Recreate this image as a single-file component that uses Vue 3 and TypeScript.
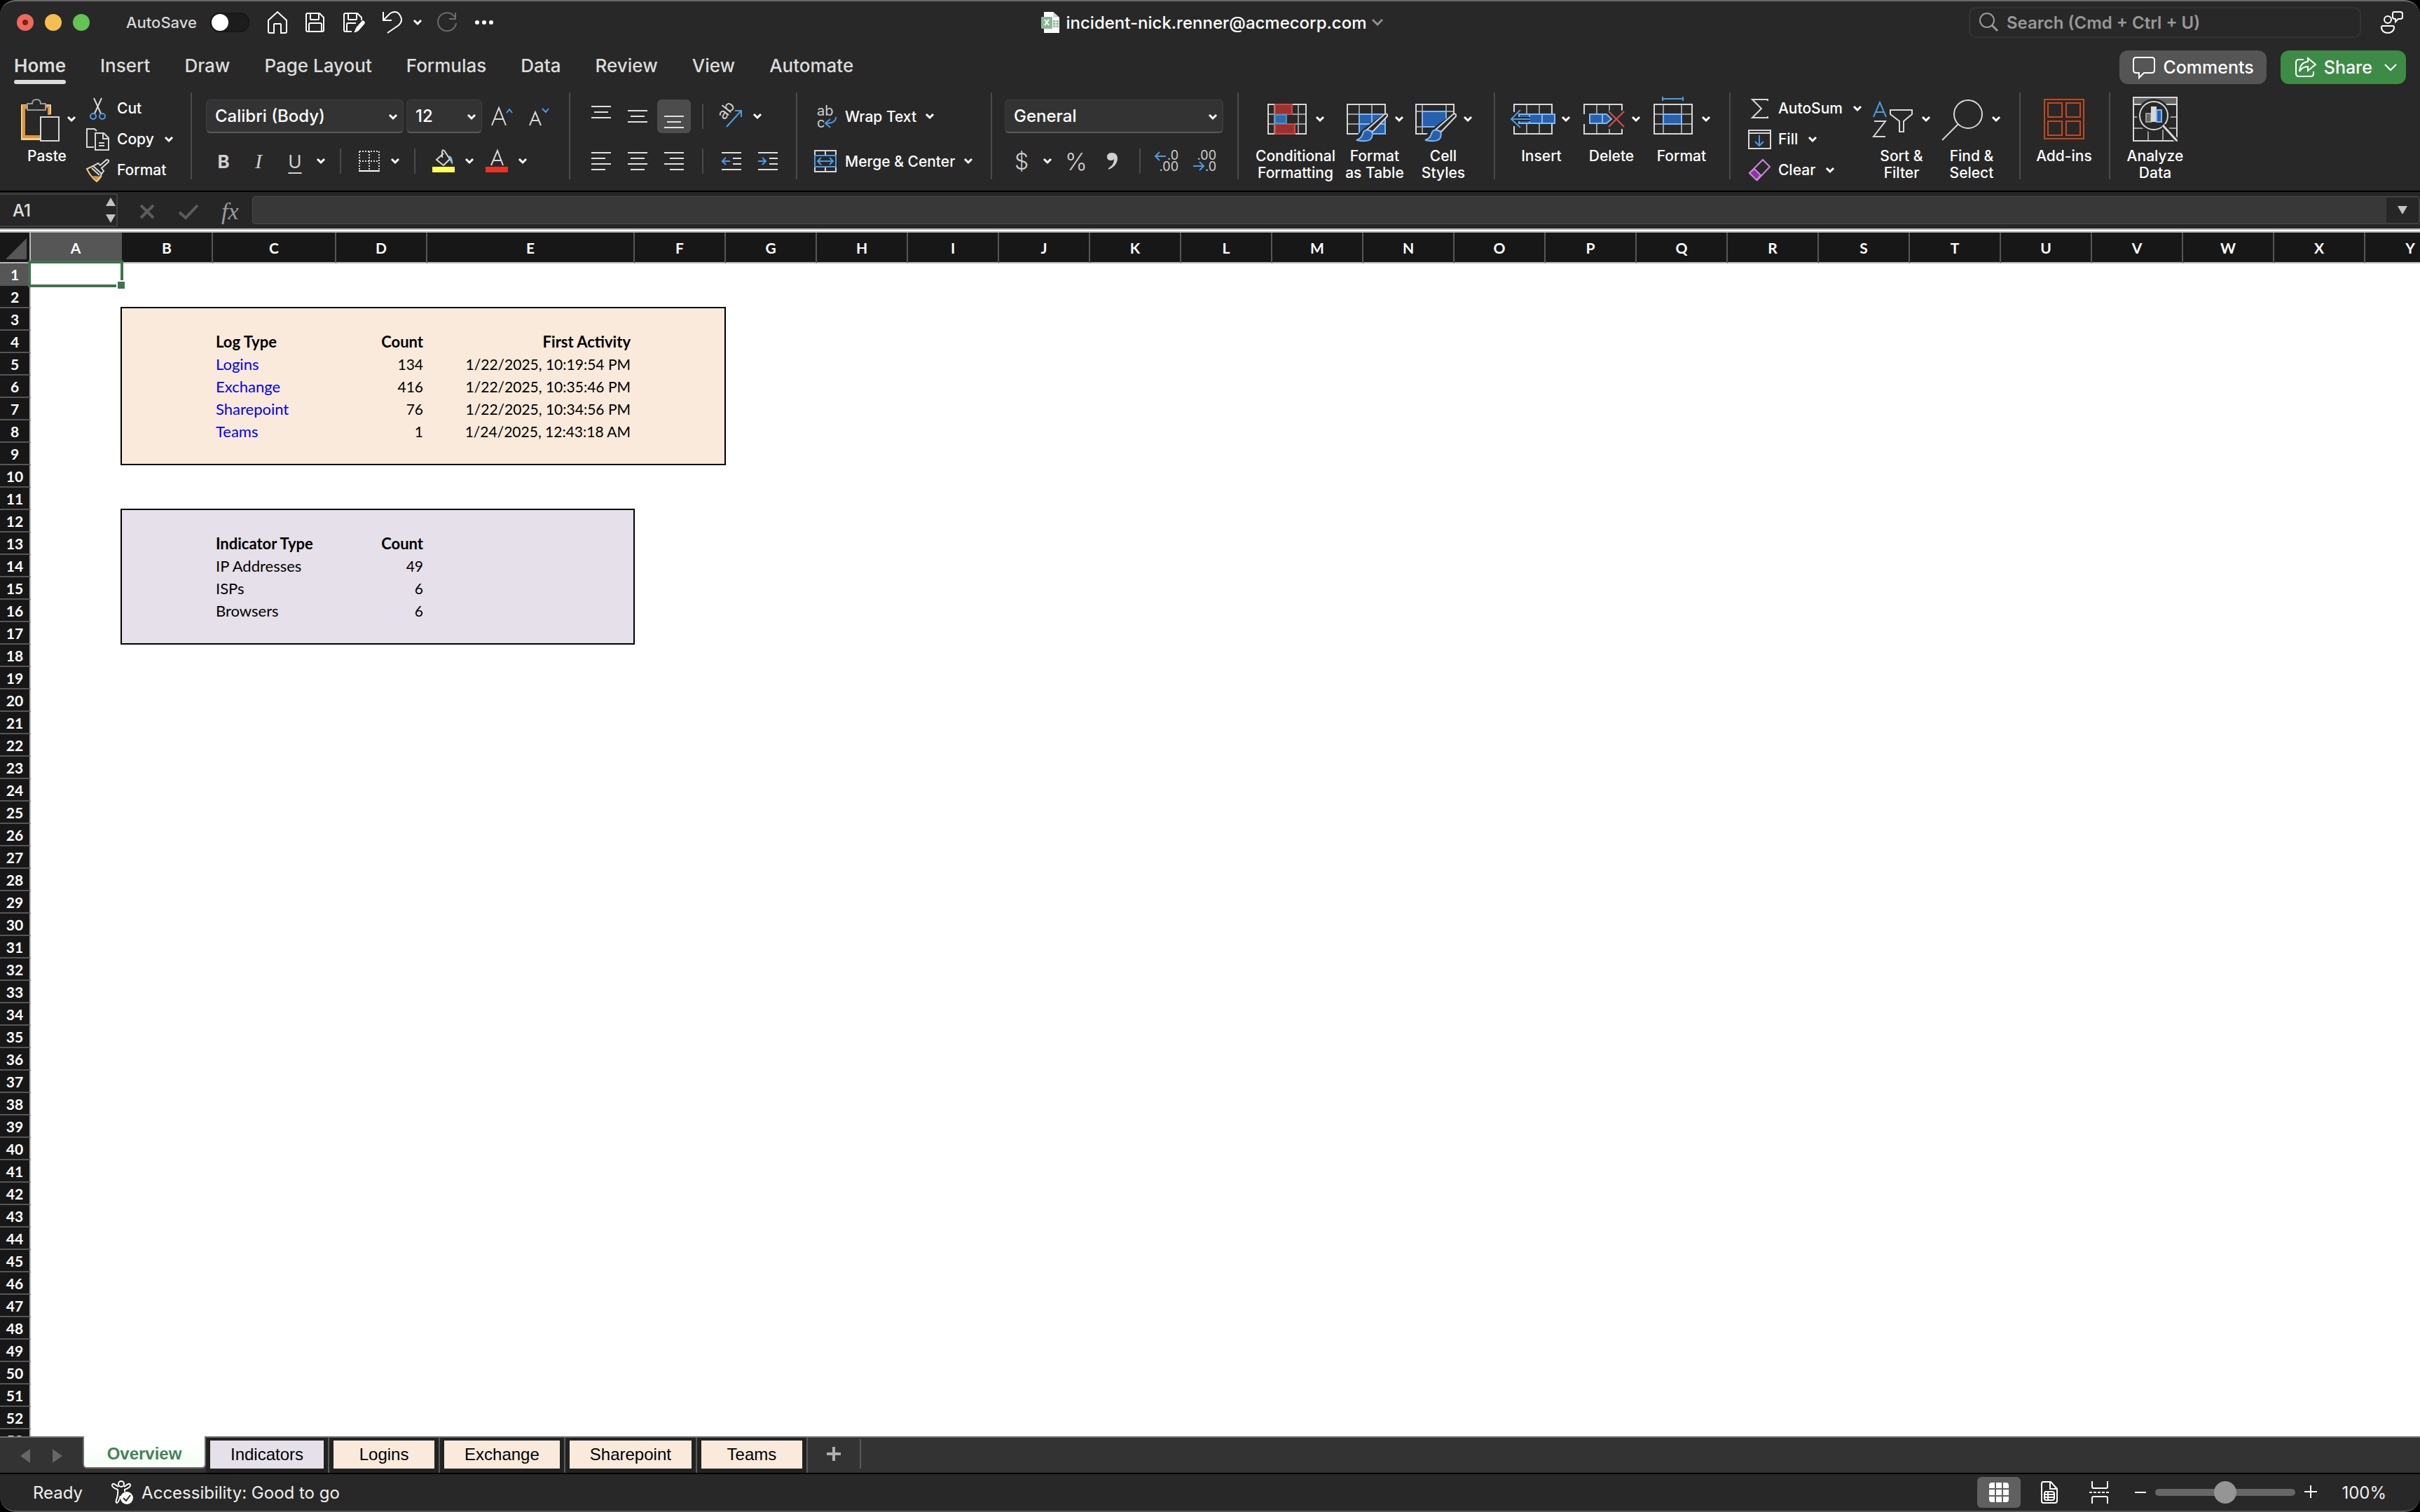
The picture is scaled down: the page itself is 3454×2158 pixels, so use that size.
<script setup lang="ts">
import { h, ref } from 'vue'

type Kind = 'text' | 'head' | 'link' | 'num'
interface Cell { text: string; kind: Kind }

const Chevron = () =>
  h('svg', { class: 'chev', viewBox: '0 0 14 10', width: 14, height: 10, 'aria-hidden': 'true' }, [
    h('path', { d: 'M2 2l5 5 5-5', fill: 'none', stroke: 'currentColor', 'stroke-width': 3 }),
  ])

const menuTabs = ['Home', 'Insert', 'Draw', 'Page Layout', 'Formulas', 'Data', 'Review', 'View', 'Automate']

const colWidths = [130, 130, 176, 130, 296]
const columns = 'ABCDEFGHIJKLMNOPQRSTUVWXY'.split('').map((name, i) => ({ name, width: colWidths[i] ?? 130 }))

const cells: Record<string, Cell> = {}
function put(row: number, values: string[], kinds: Kind[]) {
  values.forEach((text, i) => { cells['CDE'[i] + row] = { text, kind: kinds[i] } })
}
put(4, ['Log Type', 'Count', 'First Activity'], ['head', 'head', 'head'])
put(5, ['Logins', '134', '1/22/2025, 10:19:54 PM'], ['link', 'num', 'num'])
put(6, ['Exchange', '416', '1/22/2025, 10:35:46 PM'], ['link', 'num', 'num'])
put(7, ['Sharepoint', '76', '1/22/2025, 10:34:56 PM'], ['link', 'num', 'num'])
put(8, ['Teams', '1', '1/24/2025, 12:43:18 AM'], ['link', 'num', 'num'])
put(13, ['Indicator Type', 'Count'], ['head', 'head'])
put(14, ['IP Addresses', '49'], ['text', 'num'])
put(15, ['ISPs', '6'], ['text', 'num'])
put(16, ['Browsers', '6'], ['text', 'num'])

const panels = [
  { fill: 'peach', left: 1, right: 5, top: 3, bottom: 9 },
  { fill: 'lilac', left: 1, right: 4, top: 12, bottom: 17 },
]

// A panel's outline lies on the right and bottom edges of the cells that touch it.
function cellClass(col: number, row: number): string[] {
  const out: string[] = []
  for (const p of panels) {
    const inCols = col >= p.left && col <= p.right
    const inRows = row >= p.top && row <= p.bottom
    if (inCols && inRows) out.push(p.fill)
    if (inRows && (col === p.right || col === p.left - 1)) out.push('edge-right')
    if (inCols && (row === p.bottom || row === p.top - 1)) out.push('edge-bottom')
    if (row === p.top - 1 && (col === p.left - 1)) out.push('edge-corner')
  }
  const cell = cells[columns[col].name + row]
  if (cell) {
    out.push(cell.kind)
    if (col > 2) out.push('right')
  }
  return out
}

const sheets = [
  { name: 'Indicators', fill: 'lilac' },
  { name: 'Logins', fill: 'peach' },
  { name: 'Exchange', fill: 'peach' },
  { name: 'Sharepoint', fill: 'peach' },
  { name: 'Teams', fill: 'peach' },
]

const vAligns = [
  { name: 'Top align', d: 'M1 7h28M5 15h20M1 23h28', on: false },
  { name: 'Middle align', d: 'M1 13h28M5 21h20M1 29h28', on: false },
  { name: 'Bottom align', d: 'M1 21h28M5 29h20M1 37h28', on: true },
]
const hAligns = [
  { name: 'Align left', d: 'M1 9h28M1 17h20M1 25h28M1 33h20' },
  { name: 'Center', d: 'M1 9h28M5 17h20M1 25h28M5 33h20' },
  { name: 'Align right', d: 'M1 9h28M9 17h20M1 25h28M9 33h20' },
]

const autosave = ref(false)
const fontName = ref('Calibri (Body)')
const fontSize = ref('12')
const numberFormat = ref('General')
const search = ref('')
const cellRef = ref('A1')
const formula = ref('')
const zoom = ref(100)
</script>

<template>
  <div class="window">
    <header class="titlebar">
      <div class="title-left">
        <div class="lights">
          <button class="light red" aria-label="Close"><span class="dot"></span></button>
          <button class="light amber" aria-label="Minimize"></button>
          <button class="light green" aria-label="Zoom window"></button>
        </div>
        <label class="autosave">AutoSave <input v-model="autosave" type="checkbox" class="toggle"></label>
        <div class="quick">
          <button aria-label="Home"><svg width="30" height="34" viewBox="0 0 30 34"><path d="M2 14L15 2l13 12v16q0 2-2 2h-6V20q0-1-1-1h-8q-1 0-1 1v12H4q-2 0-2-2z" class="w" /></svg></button>
          <button aria-label="Save"><svg width="30" height="34" viewBox="0 0 30 34"><path d="M4 4h17l6 6v18q0 2-2 2H4q-2 0-2-2V6q0-2 2-2zM8 4v8q0 1 1 1h10q1 0 1-1V4M6 30V20q0-2 2-2h14q2 0 2 2v10" class="w" /></svg></button>
          <button aria-label="Save as"><svg width="32" height="34" viewBox="0 0 32 34"><path d="M13 30H4q-2 0-2-2V6q0-2 2-2h17l6 6v4M8 4v8q0 1 1 1h10q1 0 1-1V4M6 30V20q0-2 2-2h11" class="w" /><path d="M17 31l3-7 8-9q2-1 3 1t-1 4l-8 9z" fill="#fff" stroke="#fff" /></svg></button>
          <button class="undo" aria-label="Undo"><svg width="30" height="34" viewBox="0 0 30 34"><path d="M2 2v12h12M3 13L12 4q9-5 14 3t-2 14L8 32" class="w" /></svg><Chevron /></button>
          <button class="dim" aria-label="Redo"><svg width="30" height="34" viewBox="0 0 30 34"><path d="M27 3v9h-9M27 11A13 13 0 1 0 28 18" fill="none" stroke="#6b6b6b" stroke-width="2" /></svg></button>
          <button aria-label="More"><svg width="28" height="34" viewBox="0 0 28 34"><g fill="#fff"><circle cx="4" cy="17" r="3" /><circle cx="14" cy="17" r="3" /><circle cx="24" cy="17" r="3" /></g></svg></button>
        </div>
      </div>
      <div class="doc">
        <svg width="28" height="32" viewBox="0 0 28 32"><path d="M4 1h13l9 8v22H4z" fill="#fff" /><path d="M17 1l9 8h-9z" fill="#d5d5d5" /><path d="M17 13h8v10h-8z" fill="#8fb79b" /><path d="M17 16h8M17 20h8M21 13v10" stroke="#fff" /><rect x="0" y="8" width="16" height="17" rx="1" fill="#8ab797" /><path d="M5 12l6 8M11 12l-6 8" stroke="#fff" stroke-width="2" /></svg>
        <h1>incident-nick.renner@acmecorp.com</h1>
        <svg width="16" height="10" viewBox="0 0 16 10"><path d="M1 1l7 7 7-7" fill="none" stroke="#8f8f8f" stroke-width="3" /></svg>
      </div>
      <div class="title-right">
        <label class="search">
          <svg width="28" height="28" viewBox="0 0 28 28"><circle cx="12" cy="11" r="10" fill="none" stroke="#999" stroke-width="2" /><path d="M19 18l8 8" stroke="#999" stroke-width="3" /></svg>
          <input v-model="search" type="text" placeholder="Search (Cmd + Ctrl + U)" aria-label="Search">
        </label>
        <button aria-label="Presence"><svg width="34" height="34" viewBox="0 0 34 34"><circle cx="11" cy="13" r="5" class="w" /><path d="M4 22h14q2 0 2 2c0 5-4 8-9 8s-9-3-9-8q0-2 2-2zM20 2h9q3 0 3 3v4q0 3-3 3h-3l-4 4v-4h-1q-3 0-3-3V5q0-3 2-3z" class="w" /></svg></button>
      </div>
    </header>

    <nav class="menu">
      <div class="menu-tabs">
        <button v-for="(t, i) in menuTabs" :key="t" :class="{ active: i === 0 }">{{ t }}</button>
      </div>
      <div class="actions">
        <button class="comments"><svg width="34" height="34" viewBox="0 0 34 34"><path d="M6 3h22q4 0 4 4v14q0 4-4 4H17l-7 7v-7H6q-4 0-4-4V7q0-4 4-4z" class="w" /></svg>Comments</button>
        <button class="share"><svg width="32" height="32" viewBox="0 0 32 32"><path d="M13 5H6Q2 5 2 9v16q0 4 4 4h17q4 0 4-4v-3M19 3l11 9-11 9v-6q-8 0-12 7 1-13 12-14z" class="w" /></svg>Share<svg class="share-chev" width="20" height="12" viewBox="0 0 20 12"><path d="M2 2l8 8 8-8" class="w" /></svg></button>
      </div>
    </nav>

    <section class="ribbon">
      <div class="group clipboard">
        <button class="big">
          <span class="pic">
            <svg width="60" height="64" viewBox="0 0 60 64"><path d="M15 14H8v45h24" fill="none" stroke="#f0d08a" stroke-width="6" /><path d="M15 14H9v43h23M38 14h7v12" fill="none" stroke="#dd9440" stroke-width="4" /><path d="M40 12h7v13" fill="none" stroke="#f0d08a" stroke-width="2" /><path d="M14 10h7q0-6 6-6t6 6h7v9H14z" fill="#282828" stroke="#9b9b9b" stroke-width="2" /><path d="M33 29h26v34H33z" fill="#282828" stroke="#d8d8d8" stroke-width="2" /></svg><Chevron />
          </span>
          <span class="cap">Paste</span>
        </button>
        <div class="stack">
          <button><svg width="34" height="34" viewBox="0 0 34 34"><path d="M11 2l10 22M22 2L12 24" fill="none" stroke="#d8d8d8" stroke-width="2" /><circle cx="10" cy="28" r="4" class="b" /><circle cx="23" cy="28" r="4" class="b" /></svg>Cut</button>
          <button><svg width="34" height="34" viewBox="0 0 34 34"><path d="M11 28H1V2h11l3 3M13 8h12l7 7v17H13zM24 8v8h8M18 22h8M18 26h8" class="g" /></svg>Copy<Chevron /></button>
          <button><svg width="34" height="34" viewBox="0 0 34 34"><path d="M9 25l14 1-7 7z" fill="#dd9440" /><path d="M10 11L1 15q5 11 14 18 6-5 7-12" fill="none" stroke="#f0d08a" stroke-width="2" /><path d="M10 11l12 11 3-4-3-4 10-9q1-3-3-3l-9 8-3-3zM8 14l11 10" class="g" /></svg>Format</button>
        </div>
      </div>

      <div class="group font">
        <div class="row tight">
          <label class="drop font-drop"><select v-model="fontName" aria-label="Font"><option>Calibri (Body)</option></select><Chevron /></label>
          <label class="drop size-drop"><select v-model="fontSize" aria-label="Font size"><option>12</option></select><Chevron /></label>
          <button class="grow" aria-label="Increase font size"><svg width="34" height="32" viewBox="0 0 34 32"><path d="M2 29L12 4l10 25M6 20h12" class="g" /><path d="M23 11l4-5 4 5" class="b" /></svg></button>
          <button class="shrink" aria-label="Decrease font size"><svg width="34" height="32" viewBox="0 0 34 32"><path d="M4 29l8-19 8 19M7 22h10" class="g" /><path d="M22 5l5 5 4-5" class="b" /></svg></button>
        </div>
        <div class="row styles">
          <button class="glyph bold">B</button>
          <button class="glyph italic">I</button>
          <button class="glyph under">U</button>
          <button aria-label="Underline styles"><Chevron /></button>
          <i class="sep"></i>
          <button class="pair" aria-label="Borders"><svg width="32" height="32" viewBox="0 0 32 32"><path d="M2 2h28M2 2v26M30 2v26M16 2v26M2 16h28" fill="none" stroke="#ddd" stroke-width="2" stroke-dasharray="2 2" /><path d="M1 30h30" stroke="#fff" stroke-width="2" /></svg><Chevron /></button>
          <i class="sep"></i>
          <button class="pair" aria-label="Fill color"><svg width="32" height="34" viewBox="0 0 32 34"><path d="M16 6L6 15l10 8 9-9-8-12q-3-2-3 2v8" class="g" /><path d="M24 9q6 2 5 13-5-5-5-13z" fill="#8fbde8" /><path d="M0 25h32v8H0z" fill="#ffff54" /></svg><Chevron /></button>
          <button class="pair" aria-label="Font color"><svg width="32" height="34" viewBox="0 0 32 34"><path d="M8 23l9-21 8 21M11 16h11" class="g" /><path d="M0 25h32v8H0z" fill="#ea3323" /></svg><Chevron /></button>
        </div>
      </div>

      <div class="group align">
        <div class="row">
          <button v-for="a in vAligns" :key="a.name" class="al" :class="{ on: a.on }" :aria-label="a.name"><svg width="30" height="42" viewBox="0 0 30 42"><path :d="a.d" class="bar" /></svg></button>
          <i class="sep"></i>
          <button class="pair orient" aria-label="Orientation"><svg width="34" height="34" viewBox="0 0 34 34"><text x="8" y="23" transform="rotate(-52 8 23)" font-size="22" font-weight="400" fill="#d0d0d0">ab</text><path d="M11 32L32 9M23 9h9v9" class="b" /></svg><Chevron /></button>
        </div>
        <div class="row">
          <button v-for="a in hAligns" :key="a.name" class="al" :aria-label="a.name"><svg width="30" height="42" viewBox="0 0 30 42"><path :d="a.d" class="bar" /></svg></button>
          <i class="sep"></i>
          <button class="al wide" aria-label="Decrease indent"><svg width="30" height="42" viewBox="0 0 30 42"><path d="M1 9h28M17 17h12M17 25h12M1 33h28" class="bar" /><path d="M13 21H2M7 16l-5 5 5 5" class="b" /></svg></button>
          <button class="al" aria-label="Increase indent"><svg width="30" height="42" viewBox="0 0 30 42"><path d="M1 9h28M17 17h12M17 25h12M1 33h28" class="bar" /><path d="M1 21h11M7 16l5 5-5 5" class="b" /></svg></button>
        </div>
      </div>

      <div class="group merge">
        <button class="row"><svg width="32" height="34" viewBox="0 0 32 34"><text font-size="20" font-weight="400" fill="#d0d0d0"><tspan x="4" y="16">ab</tspan><tspan x="4" y="33">c</tspan></text><path d="M31 18q0 9-14 9M23 21l-7 6 7 6" class="b" /></svg>Wrap Text<Chevron /></button>
        <button class="row"><svg width="32" height="32" viewBox="0 0 32 32"><path d="M1 1h30v30H1zM16 1v30" class="g" /><path d="M1 8h30v16H1z" fill="#282828" stroke="#4f9be0" stroke-width="2" /><path d="M5 16h22M10 11l-5 5 5 5M22 11l5 5-5 5" class="b" /></svg>Merge &amp; Center<Chevron /></button>
      </div>

      <div class="group number">
        <label class="drop"><select v-model="numberFormat" aria-label="Number format"><option>General</option></select><Chevron /></label>
        <div class="row">
          <button class="money" aria-label="Currency"><span>$</span><Chevron /></button>
          <button class="percent">%</button>
          <button class="comma" aria-label="Comma style"><svg width="18" height="30" viewBox="0 0 18 30"><path d="M8 3c-5 0-7 3-7 6s2 5 6 5c2 0 3-1 4-2 0 6-3 10-8 13v2c8-3 13-9 13-16 0-5-3-8-8-8z" fill="#d0d0d0" /></svg></button>
          <i class="sep"></i>
          <button class="decimal" aria-label="Increase decimal"><svg width="34" height="34" viewBox="0 0 34 34"><text font-size="18" font-weight="400" fill="#d0d0d0" text-anchor="end"><tspan x="34" y="15">.0</tspan><tspan x="34" y="31">.00</tspan></text><path d="M16 10H1M7 4l-6 6 6 6" class="b" /></svg></button>
          <button class="decimal" aria-label="Decrease decimal"><svg width="34" height="34" viewBox="0 0 34 34"><text font-size="18" font-weight="400" fill="#d0d0d0" text-anchor="end"><tspan x="34" y="15">.00</tspan><tspan x="34" y="31">.0</tspan></text><path d="M1 24h15M10 18l6 6-6 6" class="b" /></svg></button>
        </div>
      </div>

      <div class="group bigs format-group">
        <button class="big">
          <span class="pic"><svg width="60" height="64" viewBox="0 0 60 64"><path d="M12 11v42M46 11v42M2 25h54M2 39h54" class="n" /><path d="M3 11h54v42H3z" class="g" /><path d="M13 11h24v14H13zM13 39h28v14H13z" fill="#9a3230" stroke="#cf4a46" stroke-width="2" /><path d="M13 26h16v12H13z" fill="#2b6fa8" stroke="#4793cf" stroke-width="2" /></svg><Chevron /></span>
          <span class="cap">Conditional<br>Formatting</span>
        </button>
        <button class="big">
          <span class="pic"><svg width="60" height="64" viewBox="0 0 60 64"><path d="M20 11v42M38 11v42M2 25h54M2 39h54" class="n" /><path d="M3 11h54v42H3z" class="g" /><path d="M20 25h37v28H20zM38 25v28M20 39h37" class="f" /><path d="M27 45L56 24q6-2 5 3L39 52 22 64 14 58z" fill="#282828" /><path d="M31 47L56 25q5-2 4 3L39 50z" class="g" /><path d="M16 62q7-2 9-9t9-5 4 10-22 4z" class="f" /></svg><Chevron /></span>
          <span class="cap">Format<br>as Table</span>
        </button>
        <button class="big">
          <span class="pic"><svg width="60" height="64" viewBox="0 0 60 64"><path d="M12 11v42M46 11v42M2 21h54M2 43h54" class="n" /><path d="M3 11h54v42H3z" class="g" /><path d="M12 21h34v22H12z" class="f" /><path d="M27 45L56 24l5 0v30H38L22 64 14 58z" fill="#282828" /><path d="M31 47L56 25q5-2 4 3L39 50z" class="g" /><path d="M16 62q7-2 9-9t9-5 4 10-22 4z" class="f" /></svg><Chevron /></span>
          <span class="cap">Cell<br>Styles</span>
        </button>
      </div>

      <div class="group bigs">
        <button class="big">
          <span class="pic"><svg width="60" height="64" viewBox="0 0 60 64"><path d="M21 11v42M39 11v42" class="n" /><path d="M3 11h54v42H3z" class="g" /><path d="M0 22h12v20H0z" fill="#282828" /><path d="M10 25h51v13H10zM25 25v13M43 25v13" class="f" /><path d="M26 32H0" stroke="#282828" stroke-width="6" /><path d="M26 32H0M12 19L-1 32l13 12" class="b" /></svg><Chevron /></span>
          <span class="cap">Insert</span>
        </button>
        <button class="big">
          <span class="pic"><svg width="60" height="64" viewBox="0 0 60 64"><path d="M21 11v42M39 11v42" class="n" /><path d="M3 11h54v42H3z" class="g" /><path d="M0 25h10v14H0zM36 20h24v26H36z" fill="#282828" /><path d="M11 25h24l7 7-7 6H11zM29 25v13" class="f" /><path d="M38 21l22 22M60 21L38 43" fill="none" stroke="#282828" stroke-width="6" /><path d="M38 21l22 22M60 21L38 43" fill="none" stroke="#d8504a" stroke-width="2" /></svg><Chevron /></span>
          <span class="cap">Delete</span>
        </button>
        <button class="big">
          <span class="pic"><svg width="60" height="64" viewBox="0 0 60 64"><path d="M16 11v42M42 11v42M2 25h54M2 39h54" class="n" /><path d="M3 11h54v42H3z" class="g" /><path d="M16 25h26v14H16z" class="f" /><path d="M15 0v6M44 0v6M15 3h29" class="b" /></svg><Chevron /></span>
          <span class="cap">Format</span>
        </button>
      </div>

      <div class="group edit">
        <div class="stack">
          <button><svg width="34" height="34" viewBox="0 0 34 34"><path d="M29 6V4H7l13 13L7 30h22v-2" class="g" /></svg>AutoSum<Chevron /></button>
          <button><svg width="34" height="34" viewBox="0 0 34 34"><path d="M2 4h31v26H2zM2 8h31" class="g" /><path d="M17 11v15M11 20l6 6 6-6" class="b" /></svg>Fill<Chevron /></button>
          <button><svg width="34" height="34" viewBox="0 0 34 34"><path d="M22 2l10 10-18 19L3 21z" fill="none" stroke="#c88ad6" stroke-width="2" /><path d="M10 15l9 9-6 7L3 21z" fill="#8a36a8" stroke="#c88ad6" stroke-width="2" /></svg>Clear<Chevron /></button>
        </div>
        <button class="big">
          <span class="pic"><svg width="60" height="64" viewBox="0 0 60 64"><path d="M2 29L11 8l9 21M5 22h12" class="b" /><path d="M3 35h16L2 57h17" class="g" /><path d="M26 19h31v6L45 35v15h-6V35L26 25z" class="g" /></svg><Chevron /></span>
          <span class="cap">Sort &amp;<br>Filter</span>
        </button>
        <button class="big">
          <span class="pic"><svg width="60" height="64" viewBox="0 0 60 64"><circle cx="37" cy="25" r="20" class="g" /><path d="M23 39L0 62" class="g" /></svg><Chevron /></span>
          <span class="cap">Find &amp;<br>Select</span>
        </button>
      </div>

      <div class="group addins">
        <button class="big">
          <span class="pic"><svg width="60" height="64" viewBox="0 0 60 64"><path d="M2 4h56v56H2zM7 9h20v20H7zM33 9h20v20H33zM7 35h20v20H7zM33 35h20v20H33z" fill="none" stroke="#c4481f" stroke-width="2" /></svg></span>
          <span class="cap">Add-ins</span>
        </button>
      </div>

      <div class="group addins last">
        <button class="big">
          <span class="pic"><svg width="64" height="64" viewBox="0 0 64 64"><path d="M1 1h62v10H1z" fill="#666" /><path d="M1 29h62M1 45h62M22 45v18M43 45v18" class="n" /><path d="M1 1h62v62H1zM1 11h62" class="g" /><circle cx="30" cy="27" r="24" fill="#282828" /><circle cx="30" cy="27" r="20" class="g" /><path d="M44 41l19 22" stroke="#282828" stroke-width="7" /><path d="M43 41l20 22" stroke="#d8d8d8" stroke-width="3" /><path d="M19 24h7v12h-7z" fill="#666" stroke="#999" stroke-width="2" /><path d="M26 14h8v22h-8z" fill="#d8d8d8" /><path d="M34 19h7v17h-7z" class="f" /></svg></span>
          <span class="cap">Analyze<br>Data</span>
        </button>
      </div>
    </section>

    <section class="formula">
      <div class="namebox">
        <input v-model="cellRef" type="text" aria-label="Name box">
        <svg width="16" height="38" viewBox="0 0 16 38"><path d="M1 13L8 1l7 12zM1 25l7 12 7-12z" fill="#c4c4c4" /></svg>
      </div>
      <div class="fbuttons">
        <button aria-label="Cancel"><svg width="24" height="24" viewBox="0 0 24 24"><path d="M3 3l18 18M21 3L3 21" fill="none" stroke="#5c5c5c" stroke-width="4" /></svg></button>
        <button aria-label="Enter"><svg width="30" height="24" viewBox="0 0 30 24"><path d="M2 13l9 8L28 3" fill="none" stroke="#5c5c5c" stroke-width="4" /></svg></button>
        <button class="fx">fx</button>
      </div>
      <div class="fbar">
        <input v-model="formula" type="text" aria-label="Formula bar">
        <button aria-label="Expand formula bar"><svg width="16" height="14" viewBox="0 0 16 14"><path d="M1 1l7 12 7-12z" fill="#c4c4c4" /></svg></button>
      </div>
    </section>
    <div class="rule"></div>

    <main class="sheet">
      <table>
        <colgroup>
          <col class="rowcol">
          <col v-for="c in columns" :key="c.name" :style="{ width: c.width + 'px' }">
        </colgroup>
        <thead>
          <tr>
            <th class="corner" aria-label="Select all"><svg width="44" height="42" viewBox="0 0 44 42"><path d="M38 8v30H8z" fill="#565656" /></svg></th>
            <th v-for="(c, i) in columns" :key="c.name" scope="col" :class="{ sel: i === 0 }">{{ c.name }}</th>
          </tr>
        </thead>
        <tbody>
          <tr v-for="r in 53" :key="r">
            <th scope="row" :class="{ sel: r === 1 }">{{ r }}</th>
            <td v-for="(c, i) in columns" :key="c.name" :class="cellClass(i, r)">
              <a v-if="cells[c.name + r]?.kind === 'link'" href="#">{{ cells[c.name + r].text }}</a>
              <template v-else>{{ cells[c.name + r]?.text }}</template>
              <span v-if="r === 1 && i === 0" class="cursor"><span class="handle"></span></span>
            </td>
          </tr>
        </tbody>
      </table>
    </main>

    <nav class="sheets">
      <div class="arrows">
        <button aria-label="Previous sheet"><svg width="16" height="22" viewBox="0 0 16 22"><path d="M15 1v20L1 11z" fill="#666" /></svg></button>
        <button aria-label="Next sheet"><svg width="16" height="22" viewBox="0 0 16 22"><path d="M1 1v20l14-10z" fill="#666" /></svg></button>
      </div>
      <button class="current"><span>Overview</span></button>
      <button v-for="s in sheets" :key="s.name" class="tab"><span :class="s.fill">{{ s.name }}</span></button>
      <button class="add" aria-label="Add sheet"><svg width="20" height="20" viewBox="0 0 20 20"><path d="M10 0v20M0 10h20" stroke="#b0b0b0" stroke-width="4" /></svg></button>
    </nav>

    <footer class="status">
      <span class="ready">Ready</span>
      <button class="access"><svg width="34" height="36" viewBox="0 0 34 36"><circle cx="15" cy="6" r="4" class="w" /><path d="M11 10L5 6Q2 5 2 8t8 6q1 6-2 15-1 4 1 4t5-10M19 10l6-4q3-1 3 2t-8 6v3" class="w" /><circle cx="23" cy="26" r="9" fill="#fff" /><path d="M18 26l4 4 6-8" fill="none" stroke="#282828" stroke-width="2" /></svg>Accessibility: Good to go</button>
      <div class="views">
        <button class="view on" aria-label="Normal view"><svg width="30" height="30" viewBox="0 0 30 30"><rect x="1" y="1" width="28" height="28" rx="4" fill="#fff" /><path d="M10 0v30M20 0v30M0 10h30M0 20h30" stroke="#606060" stroke-width="2" /></svg></button>
        <button class="view" aria-label="Page layout view"><svg width="26" height="34" viewBox="0 0 26 34"><path d="M4 2h11l9 10v17q0 3-3 3H4q-2 0-2-3V5q0-3 2-3zM14 2v10h10M8 16h9q3 0 3 3v6q0 3-3 3H8q-2 0-2-3v-6q0-3 2-3zM6 20h14M6 24h14M11 16v12" class="w" /></svg></button>
        <button class="view" aria-label="Page break view"><svg width="32" height="34" viewBox="0 0 32 34"><path d="M5 1v8q0 2 2 2h18q2 0 2-2V1M5 33v-8q0-2 2-2h18q2 0 2 2v8" class="w" /><path d="M1 17h30" stroke="#fff" stroke-width="2" stroke-dasharray="4 2" /></svg></button>
      </div>
      <div class="zoom">
        <button aria-label="Zoom out"><svg width="18" height="18" viewBox="0 0 18 18"><path d="M1 9h16" class="w" /></svg></button>
        <input v-model="zoom" type="range" min="0" max="200" aria-label="Zoom">
        <button aria-label="Zoom in"><svg width="20" height="20" viewBox="0 0 20 20"><path d="M1 9h18M10 0v18" class="w" /></svg></button>
        <span>{{ zoom }}%</span>
      </div>
    </footer>
  </div>
</template>

<style>
body { margin: 0; background: #000; }
</style>

<style scoped>
.window {
  height: 100vh; box-sizing: border-box; display: flex; flex-direction: column; overflow: hidden;
  border-top: 2px solid #6a6a6a; border-bottom: 2px solid #555; border-radius: 22px;
  background: #282828; color: #fff; font-family: Inter, "Liberation Sans", sans-serif; font-size: 21px; font-weight: 500;
}
button, input, select { font: inherit; color: inherit; border: 0; margin: 0; padding: 0; background: none; outline: 0; border-radius: 0; }
button { display: flex; align-items: center; white-space: nowrap; }
svg { display: block; flex: none; overflow: visible; }
.w { fill: none; stroke: #fff; stroke-width: 2; }
.g { fill: none; stroke: #d8d8d8; stroke-width: 2; }
.n { fill: none; stroke: #9b9b9b; stroke-width: 2; }
.b { fill: none; stroke: #4f9be0; stroke-width: 2; }
.f { fill: #2860b0; stroke: #84b8ee; stroke-width: 2; }
.bar { fill: none; stroke: #e0e0e0; stroke-width: 2; }

.titlebar { display: grid; grid-template-columns: 1fr auto 1fr; align-items: center; height: 60px; flex: none; }
.title-left { display: flex; align-items: center; padding-left: 24px; }
.lights { display: flex; gap: 16px; margin-right: 52px; }
.light { width: 24px; height: 24px; border-radius: 50%; justify-content: center; }
.red { background: #ec6a5e; }
.amber { background: #f5bf4f; }
.green { background: #61c454; }
.dot { width: 8px; height: 8px; border-radius: 50%; background: #8c1a10; }
.autosave { display: flex; align-items: center; gap: 19px; font-size: 22px; color: #d6d6d6; }
.toggle { appearance: none; width: 56px; height: 28px; border-radius: 14px; background: #1c1c1c; box-shadow: inset 0 0 2px #000; }
.toggle::before { content: ""; display: block; width: 24px; height: 24px; margin: 2px; border-radius: 50%; background: #fff; }
.quick { display: flex; align-items: center; gap: 24px; margin-left: 25px; }
.undo { gap: 14px; }
.undo + .dim { margin-left: -4px; }
.doc { display: flex; align-items: center; gap: 8px; padding-left: 6px; }
.doc h1 { margin: 0; font-size: 24px; font-weight: 500; }
.title-right { display: flex; align-items: center; justify-content: flex-end; gap: 27px; padding-right: 23px; }
.search { display: flex; align-items: center; gap: 12px; box-sizing: border-box; width: 560px; height: 44px; padding: 0 12px; border: 2px solid #343434; border-radius: 10px; }
.search input { flex: 1; min-width: 0; font-size: 24px; font-weight: 600; }
.search input::placeholder { color: #989898; opacity: 1; }

.menu { display: flex; justify-content: space-between; height: 70px; flex: none; padding: 0 20px; }
.menu-tabs { display: flex; gap: 49px; align-items: flex-start; }
.menu-tabs button { position: relative; height: 62px; font-size: 26px; color: #dcdcdc; }
.menu-tabs .active { font-weight: 600; }
.menu-tabs .active::after { content: ""; position: absolute; left: 0; right: 0; bottom: 4px; height: 6px; border-radius: 3px; background: #dcdcdc; }
.actions { display: flex; gap: 20px; padding-top: 10px; align-items: flex-start; }
.actions button { height: 48px; border-radius: 12px; font-size: 25px; }
.comments { gap: 10px; padding: 0 18px; background: #555; }
.share { gap: 10px; padding: 0 12px 0 20px; background: #3e8b47; }
.share-chev { margin-left: 6px; }

.ribbon { display: flex; height: 140px; flex: none; align-items: flex-start; border-bottom: 2px solid #000; }
.group { height: 124px; box-sizing: border-box; border-right: 2px solid #4a4a4a; flex: none; display: flex; }
.last { border-right: 0; }
.big { flex-direction: column; min-width: 84px; padding-top: 6px; height: 124px; }
.pic { display: flex; align-items: center; gap: 10px; height: 64px; }
.cap { margin-top: 9px; line-height: 24px; text-align: center; }
.stack { display: flex; flex-direction: column; }
.stack button { flex: none; height: 44px; gap: 10px; padding-top: 1px; }
.stack .chev { margin-left: 4px; }
.clipboard { width: 274px; padding-left: 25px; gap: 14px; }
.row { display: flex; align-items: center; height: 48px; }
.sep { width: 2px; height: 36px; background: #4a4a4a; }
.font { width: 540px; padding: 10px 0 0 20px; flex-direction: column; gap: 16px; }
.tight { gap: 4px; }
.drop { position: relative; display: block; height: 48px; }
.drop select { appearance: none; width: 100%; height: 48px; box-sizing: border-box; padding: 0 12px; font-size: 24px; color: #fff; background: #333; border: 1px solid #404040; border-bottom: 2px solid #5a5a5a; border-radius: 6px; }
.drop .chev { position: absolute; right: 8px; top: 20px; pointer-events: none; }
.font-drop { width: 282px; }
.size-drop { width: 108px; }
.grow { margin-left: 8px; }
.shrink { margin-left: 14px; }
.styles > * { flex: none; }
.glyph { width: 52px; justify-content: center; font-size: 26px; color: #d0d0d0; }
.bold { font-weight: 700; }
.italic { font-family: "Liberation Serif", serif; font-style: italic; font-size: 30px; font-weight: 400; }
.under { font-weight: 400; text-decoration: underline; text-underline-offset: 6px; }
.styles { padding-left: 1px; }
.styles .bold { width: 48px; }
.glyph + button .chev { margin-left: 4px; }
.styles .sep { margin: 0 24px 0 20px; }
.pair { gap: 14px; }
.pair + .pair { margin-left: 16px; }
.align { width: 324px; padding: 10px 0 0 20px; flex-direction: column; gap: 16px; }
.al { width: 48px; height: 48px; justify-content: center; border-radius: 6px; margin-right: 4px; }
.on { background: #4c4c4c; }
.align .sep { margin-left: 12px; }
.orient { margin-left: 22px; }
.align .wide { margin-left: 16px; }
.merge { width: 278px; padding: 10px 0 0 24px; flex-direction: column; gap: 16px; }
.merge button { gap: 12px; }
.number { width: 352px; padding: 10px 20px 0 18px; flex-direction: column; gap: 16px; }
.number .row { color: #d0d0d0; padding-left: 14px; }
.money { width: 54px; justify-content: space-between; font-size: 32px; font-weight: 300; }
.money .chev { color: #fff; }
.percent { width: 32px; justify-content: center; font-size: 34px; font-weight: 300; margin-left: 18px; }
.comma { margin: 0 29px 0 27px; }
.decimal { margin-left: 20px; }
.bigs { gap: 16px; padding: 0 26px 0 24px; }
.format-group { gap: 14px; padding-right: 30px; }
.edit { padding: 0 26px 0 24px; gap: 16px; }
.edit .stack { width: 162px; }
.addins { padding: 0 22px 0 20px; }
.last { padding-left: 22px; }

.formula { display: flex; align-items: center; height: 52px; flex: none; background: #262626; }
.rule { height: 2px; flex: none; background: #fff; border: 0 solid #b4b4b4; border-width: 2px 0; }
.namebox { display: flex; align-items: center; justify-content: space-between; width: 168px; height: 48px; box-sizing: border-box; padding: 0 0 0 18px; border: 2px solid #404040; border-left: 0; font-size: 24px; color: #e0e0e0; }
.namebox input { width: 100px; }
.fbuttons { display: flex; align-items: center; gap: 32px; width: 192px; box-sizing: border-box; padding: 4px 0 0 30px; }
.fx { font-family: "Liberation Serif", serif; font-style: italic; font-size: 34px; font-weight: 400; color: #9c9c9c; line-height: 36px; }
.fbar { flex: 1; display: flex; height: 40px; box-sizing: border-box; border: 1px solid #484848; border-radius: 4px; background: #383838; }
.fbar input { flex: 1; min-width: 0; padding: 0 12px; }
.fbar button { width: 46px; margin: 1px; justify-content: center; background: #262626; border-radius: 2px; }

.sheet { flex: 1; min-height: 0; overflow: hidden; background: #fff; color: #000; font-family: Lato, "Liberation Sans", sans-serif; font-size: 21px; font-weight: 400; }
table { table-layout: fixed; width: 0; border-spacing: 0; }
.rowcol { width: 44px; }
th, td { box-sizing: border-box; height: 32px; line-height: 28px; white-space: nowrap; }
th { padding: 2px 0 0; color: #fff; background: #171717; font-weight: 700; }
thead th { height: 44px; border-right: 2px solid #565656; border-bottom: 2px solid #b8b8b8; }
thead .corner { border-right-color: #b8b8b8; position: relative; }
.corner svg { position: absolute; left: 0; top: 0; }
tbody th { border-right: 2px solid #b8b8b8; border-bottom: 2px solid #565656; }
th.sel { background: #565656; }
td { padding: 2px 6px 2px 4px; text-align: left; position: relative; }
.peach { background: #faeadc; }
.lilac { background: #e5e0ea; }
.edge-right { box-shadow: inset -2px 0 #000; }
.edge-bottom { box-shadow: inset 0 -2px #000; }
.edge-right.edge-bottom { box-shadow: inset -2px -2px #000; }
.edge-corner { background: linear-gradient(#000, #000) right bottom / 2px 2px no-repeat; }
.head, .link, .text { font-size: 22px; }
.head { font-weight: 700; }
.right { text-align: right; }
a { color: #0000f5; text-decoration: none; }
.cursor { position: absolute; left: -4px; top: -4px; right: -2px; bottom: -2px; border: 4px solid #3e744e; }
.handle { position: absolute; right: -6px; bottom: -6px; width: 10px; height: 10px; background: #3e744e; box-shadow: 0 0 0 2px #fff; }

.sheets { display: flex; height: 54px; box-sizing: border-box; flex: none; align-items: flex-start; background: #333; border-top: 2px solid #6c6e6b; border-bottom: 2px solid #000; font-family: "Liberation Sans", sans-serif; font-size: 24px; font-weight: 400; color: #000; }
.arrows { display: flex; gap: 30px; width: 118px; height: 52px; box-sizing: border-box; padding-left: 28px; }
.current { box-sizing: border-box; width: 176px; height: 46px; margin-top: -2px; padding: 10px 4px 4px; background: #fff; border: 2px solid #6c6e6b; border-top: 0; border-radius: 0 0 6px 6px; color: #47825a; font-weight: 700; }
.current span { flex: 1; line-height: 30px; background: linear-gradient(#fff, #f4fff4); }
.tab { height: 50px; padding: 4px 6px 6px; background: #222; border-right: 2px solid #5a5a5a; }
.tab span { min-width: 144px; box-sizing: border-box; padding: 0 29px; line-height: 40px; text-align: center; }
.add { width: 76px; height: 42px; margin-top: 2px; justify-content: center; border-right: 2px solid #5a5a5a; }

.status { display: flex; align-items: center; height: 52px; flex: none; font-size: 24px; font-weight: 400; color: #f0f0f0; padding: 0 48px 0 47px; }
.access { gap: 10px; margin-left: 40px; }
.views { display: flex; gap: 10px; margin-left: auto; }
.view { width: 62px; height: 44px; justify-content: center; border-radius: 6px; }
.view.on { background: #606060; }
.zoom { display: flex; align-items: center; gap: 12px; margin-left: 18px; }
.zoom span { margin-left: 22px; }
.zoom input { appearance: none; width: 200px; height: 10px; border-radius: 5px; background: #676767; }
.zoom input::-webkit-slider-thumb { appearance: none; width: 32px; height: 32px; border-radius: 50%; background: #959595; }
</style>
